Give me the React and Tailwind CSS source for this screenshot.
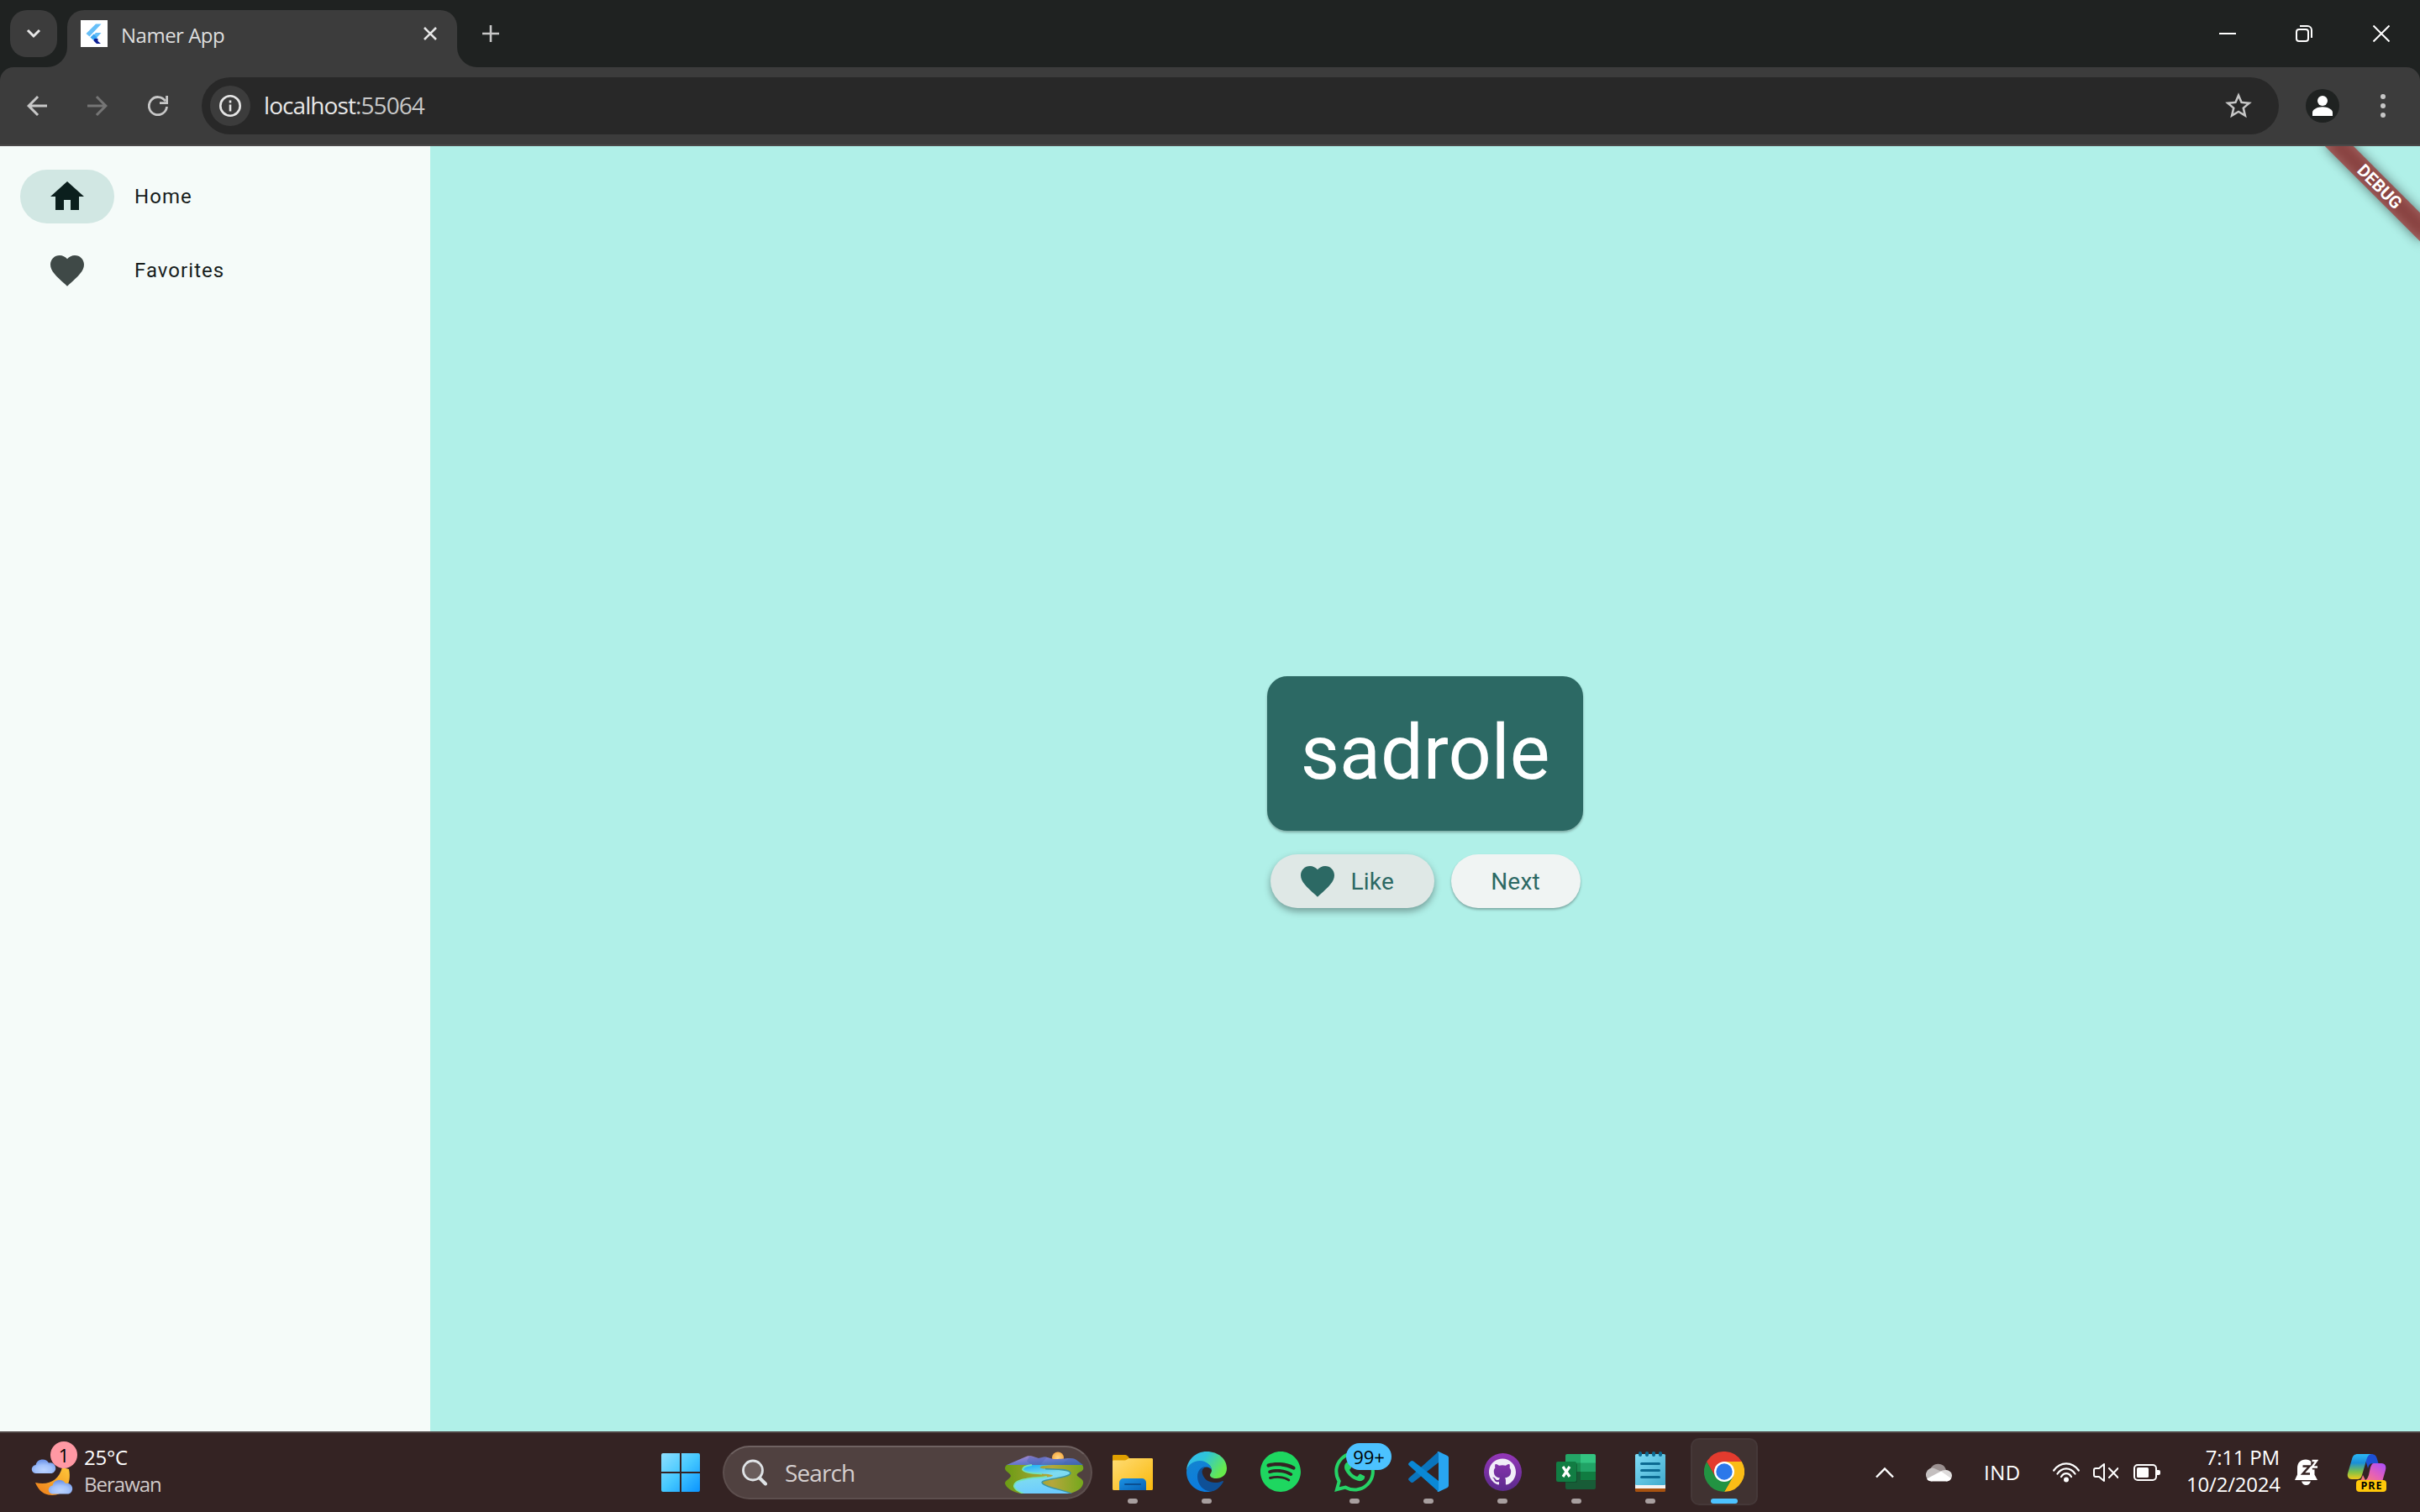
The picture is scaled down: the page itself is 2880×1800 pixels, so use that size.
import React from "react";
import { SiSpotify, SiGithub, SiWhatsapp } from "react-icons/si";

const HEART =
  "M12 21.35l-1.45-1.32C5.4 15.36 2 12.28 2 8.5 2 5.42 4.42 3 7.5 3c1.74 0 3.41.81 4.5 2.09C13.09 3.81 14.76 3 16.5 3 19.58 3 22 5.42 22 8.5c0 3.78-3.4 6.86-8.55 11.54L12 21.35z";
const HOME = "M10 20v-6h4v6h5v-8h3L12 3 2 12h3v8z";
const ARROW = "M20 11H7.83l5.59-5.59L12 4l-8 8 8 8 1.41-1.41L7.83 13H20v-2z";

function Material({ d, className }) {
  return (
    <svg viewBox="0 0 24 24" className={className} fill="currentColor">
      <path d={d} />
    </svg>
  );
}

function FlutterFavicon() {
  return (
    <span className="flex size-8 shrink-0 items-center justify-center bg-white">
      <svg viewBox="0 0 32 32" className="size-8">
        <path d="M18 4.500h6.500L10.500 19.500 6.500 16z" fill="#66bff8" />
        <path d="M18 15h6.500l-5 5.500-3-.5-4.500 1z" fill="#66bff8" />
        <path d="M11.500 20.500l4-4 4.500 4.500-4 3.500z" fill="#38a4f2" />
        <path d="M15.500 24.500l1-2.500h4v3l3.500 3h-5z" fill="#0d1f94" />
      </svg>
    </span>
  );
}

function TitleBar() {
  return (
    <div className="flex h-20 shrink-0 bg-[#1f2221]">
      <div className="ml-3 mt-3 flex size-14 items-center justify-center rounded-[20px] bg-[#3c3c3c]">
        <svg viewBox="0 0 20 20" className="size-5" fill="none" stroke="#e6e6e6" strokeWidth="3">
          <path d="M3 6l7 7 7-7" />
        </svg>
      </div>
      <div className="relative ml-3 mt-3 flex h-[68px] w-[464px] rounded-t-[20px] bg-[#3c3c3c] pl-4 pr-[22px]">
        <svg viewBox="0 0 24 24" className="absolute bottom-0 -left-6 size-6" fill="#3c3c3c">
          <path d="M24 0v24H0A24 24 0 0 0 24 0z" />
        </svg>
        <svg viewBox="0 0 24 24" className="absolute bottom-0 -right-6 size-6" fill="#3c3c3c">
          <path d="M0 0v24h24A24 24 0 0 1 0 0z" />
        </svg>
        <div className="flex h-14 w-full items-center">
          <FlutterFavicon />
          <span className="ml-4 flex-1 whitespace-nowrap pt-[3px] font-['Open_Sans',sans-serif] text-[24px] leading-8 tracking-[-0.5px] text-[#dedede]">
            Namer App
          </span>
          <svg viewBox="0 0 20 20" className="size-5" fill="none" stroke="#e6e6e6" strokeWidth="2.600">
            <path d="M3 3l14 14M17 3L3 17" />
          </svg>
        </div>
      </div>
      <div className="ml-[30px] flex items-center">
        <svg viewBox="0 0 20 20" className="size-5" fill="none" stroke="#c7c7c7" strokeWidth="2.600">
          <path d="M10 0v20M0 10h20" />
        </svg>
      </div>
      <div className="ml-auto flex items-center pr-9">
        <svg viewBox="0 0 20 20" className="size-5" stroke="#fff" strokeWidth="2">
          <path d="M0 10h20" />
        </svg>
        <svg viewBox="0 0 20 20" className="ml-[71px] size-5" fill="none" stroke="#fff" strokeWidth="2">
          <rect x="1" y="5" width="14" height="14" rx="3" />
          <path d="M5 1h9a5 5 0 0 1 5 5v9" />
        </svg>
        <svg viewBox="0 0 20 20" className="ml-[72px] size-5" stroke="#fff" strokeWidth="2">
          <path d="M0.500 0.500l19 19M19.500 0.500l-19 19" />
        </svg>
      </div>
    </div>
  );
}

function Toolbar() {
  return (
    <div className="h-[94px] shrink-0 bg-[#1f2221]">
      <div className="flex h-full items-center rounded-t-[16px] border-b-2 border-[#4a4848] bg-[#3c3c3c] pl-[26px] pr-[35px]">
        <Material d={ARROW} className="size-9 text-[#c7c7c7]" />
        <Material d={ARROW} className="ml-9 size-9 rotate-180 text-[#757575]" />
        <svg viewBox="0 0 24 24" className="ml-[42px] size-6" fill="none" stroke="#c7c7c7" strokeWidth="2.800">
          <path d="M20.800 6.300A10.600 10.600 0 1 0 22.500 13" />
          <path d="M22.600 0v8.600H14" />
        </svg>
        <div className="ml-10 flex h-[68px] flex-1 items-center rounded-full bg-[#282828] pl-2.5 pr-[29px]">
          <span className="flex size-12 items-center justify-center rounded-full bg-[#3c3c3c]">
            <svg viewBox="0 0 26 26" className="size-[26px]" fill="none" stroke="#e6e6e6" strokeWidth="2.600">
              <circle cx="13" cy="13" r="11.700" />
              <path d="M13 11.500v8M13 6.500v3" />
            </svg>
          </span>
          <span className="ml-4 flex-1 -translate-y-px whitespace-nowrap font-['Open_Sans',sans-serif] text-[28px] leading-9 tracking-[-0.92px] text-[#e8e8e8]">
            localhost<span className="text-[#c7c7c7]">:55064</span>
          </span>
          <svg viewBox="0 0 24 24" className="size-[38px]" fill="#c7c7c7">
            <path d="M22 9.240l-7.190-.62L12 2 9.190 8.630 2 9.240l5.460 4.730L5.820 21 12 17.270 18.180 21l-1.630-7.030L22 9.240zM12 15.400l-3.760 2.270 1-4.280-3.320-2.880 4.380-.38L12 6.100l1.710 4.040 4.380.38-3.320 2.880 1 4.280L12 15.400z" />
          </svg>
        </div>
        <svg viewBox="0 0 40 40" className="ml-8 size-10">
          <circle cx="20" cy="20" r="20" fill="#1f2221" />
          <circle cx="20" cy="14" r="6" fill="#fff" />
          <path d="M8 32v-4c0-4 6-6.800 12-6.800s12 2.800 12 6.800v4z" fill="#fff" />
        </svg>
        <svg viewBox="0 0 18 36" className="ml-[43px] h-9 w-[18px]" fill="#c7c7c7">
          <circle cx="9" cy="7" r="3" />
          <circle cx="9" cy="18" r="3" />
          <circle cx="9" cy="29" r="3" />
        </svg>
      </div>
    </div>
  );
}

function RailItem({ d, label, active }) {
  return (
    <div className="flex h-16 items-center">
      <span
        className={
          active
            ? "flex h-16 w-28 items-center justify-center rounded-full bg-[#d1e7e3] text-[#0b1f1d]"
            : "flex h-16 w-28 items-center justify-center rounded-full text-[#3f4947]"
        }
      >
        <Material d={d} className="size-12" />
      </span>
      <span className="ml-6 font-['Roboto',sans-serif] text-[24px] leading-8 tracking-[1.05px] text-[#171d1c]">
        {label}
      </span>
    </div>
  );
}

function Page() {
  return (
    <div className="flex min-h-0 flex-1">
      <nav className="flex w-[512px] shrink-0 flex-col gap-6 bg-[#f5fbf9] pl-6 pt-7">
        <RailItem d={HOME} label="Home" active />
        <RailItem d={HEART} label="Favorites" />
      </nav>
      <main className="relative flex flex-1 flex-col items-center justify-center gap-7 overflow-hidden bg-[#b0f0e8] pt-2 font-['Roboto',sans-serif]">
        <div className="flex h-[184px] w-[376px] items-center justify-center rounded-[24px] bg-[#2c6964] shadow-[0_2px_3px_rgba(0,0,0,0.3)]">
          <span className="text-[90px] leading-[104px] text-white">sadrole</span>
        </div>
        <div className="flex gap-5 text-[28px] leading-10 tracking-[0.2px] text-[#2c6964]">
          <button className="flex h-16 w-[195px] items-center rounded-full bg-[#dfe8e6] pl-8 shadow-[0_4px_8px_rgba(0,0,0,0.35)]">
            <Material d={HEART} className="size-12" />
            <span className="ml-4 translate-y-px">Like</span>
          </button>
          <button className="flex h-16 w-[154px] items-center justify-center rounded-full bg-[#f0f4f3] shadow-[0_2px_3px_rgba(0,0,0,0.3)]">
            <span className="translate-y-px">Next</span>
          </button>
        </div>
        <div className="absolute right-0 top-0 size-0 origin-top-left rotate-45">
          <div className="absolute -left-20 top-14 h-6 w-40 bg-black/50 blur-[7px]" />
          <div className="absolute -left-20 top-14 h-6 w-40 bg-[rgba(166,34,34,0.627)] text-center text-[20.4px] font-bold leading-6 text-white">
            DEBUG
          </div>
        </div>
      </main>
    </div>
  );
}

function CloudShape({ x, y, s }) {
  return (
    <path
      transform={`translate(${x} ${y}) scale(${s})`}
      d="M5 18a5 5 0 0 1-.5-10A8.500 8.500 0 0 1 20 5.500 6 6 0 0 1 23.500 18z"
      fill="url(#wx-cloud)"
    />
  );
}

function Weather() {
  return (
    <div className="flex h-full w-[480px] items-center pl-[36px]">
      <div className="relative h-16 w-[60px]">
        <svg viewBox="0 0 60 64" className="h-16 w-[60px]">
          <defs>
            <radialGradient id="wx-cloud" cx=".5" cy=".75" r=".7">
              <stop offset="0" stopColor="#bcd4ff" />
              <stop offset=".5" stopColor="#a3c2fb" />
              <stop offset="1" stopColor="#6d94e8" />
            </radialGradient>
            <linearGradient id="wx-moon" x1="1" y1="0" x2="0" y2="1">
              <stop offset="0" stopColor="#ffc83a" />
              <stop offset="1" stopColor="#ec7a18" />
            </linearGradient>
          </defs>
          <path d="M6 44c16 4 28-3 32-18l8 2c4 18-6 31-20 31-9 0-16-5-20-15z" fill="url(#wx-moon)" />
          <CloudShape x="2" y="15" s="1" />
          <CloudShape x="22" y="39.500" s="1" />
        </svg>
        <span className="absolute left-6 top-[-5px] flex size-8 items-center justify-center rounded-full bg-[#ff99a4] font-['Open_Sans',sans-serif] text-[22px] leading-none text-black">
          1
        </span>
      </div>
      <div className="ml-1 -translate-y-[2px] font-['Open_Sans',sans-serif] text-[24px] leading-8">
        <div className="tracking-[-0.2px] text-white">25°C</div>
        <div className="tracking-[-1px] text-[#cfc9c9]">Berawan</div>
      </div>
    </div>
  );
}

function StartIcon() {
  return (
    <svg viewBox="0 0 46 46" className="size-[46px]">
      <defs>
        <linearGradient id="win" gradientUnits="userSpaceOnUse" x1="0" y1="0" x2="46" y2="46">
          <stop offset="0" stopColor="#8fdfff" />
          <stop offset=".5" stopColor="#45c8ff" />
          <stop offset="1" stopColor="#0a94ff" />
        </linearGradient>
      </defs>
      <g fill="url(#win)">
        <path d="M2 0h20v22H0V2a2 2 0 0 1 2-2zM24 0h20a2 2 0 0 1 2 2v20H24zM0 24h22v22H2a2 2 0 0 1-2-2zM24 24h22v20a2 2 0 0 1-2 2H24z" />
      </g>
    </svg>
  );
}

function Landscape() {
  return (
    <svg viewBox="0 0 94 50" className="h-[50px] w-[94px]">
      <defs>
        <linearGradient id="ls-grass" x1="0" y1="0" x2="1" y2="0">
          <stop offset="0" stopColor="#6a9c14" />
          <stop offset=".6" stopColor="#b5a73c" />
          <stop offset="1" stopColor="#74a81c" />
        </linearGradient>
        <linearGradient id="ls-river" gradientUnits="userSpaceOnUse" x1="40" y1="16" x2="45" y2="50">
          <stop offset="0" stopColor="#2ab4f6" />
          <stop offset=".35" stopColor="#7fdcf0" />
          <stop offset="1" stopColor="#6ccbff" />
        </linearGradient>
        <linearGradient id="ls-mtn" x1="0" y1="0" x2="1" y2="1">
          <stop offset="0" stopColor="#b38bd0" />
          <stop offset=".5" stopColor="#6878cc" />
          <stop offset="1" stopColor="#2f6ba8" />
        </linearGradient>
        <radialGradient id="ls-sun">
          <stop offset="0" stopColor="#ffd98a" />
          <stop offset="1" stopColor="#f8ad45" />
        </radialGradient>
      </defs>
      <circle cx="63" cy="7.500" r="7" fill="url(#ls-sun)" />
      <path d="M2 16L24 6.500c3-1.500 5-1.500 8-1L40 8l7-1.500c5 0 7 2.500 13 2.500 8 0 12-1 18-1 7 0 10 5 15 8z" fill="url(#ls-mtn)" />
      <path d="M29 5.500l-3 6 6 4.500h10l8-9.500c-4-.5-7 0-10 1.500zM78 8c-5 2-7 5-12 8h27c-4-3-8-8-15-8z" fill="#4a62b4" opacity=".4" />
      <path d="M2 16h90c2 3 2 6-2 8-4 2-5 3-4 5 4 3 8 5 7 9-1 6-7 9-15 12H18C9 48 1 43 0 38c0-4 6-5 7-9-1-4-7-5-7-9 0-2 1-3 2-4z" fill="url(#ls-grass)" />
      <path d="M32 16C24 17 21 19 21 21.500 22 25 32 26 44 26.500 52 27 57 27.500 57 29 50 32 34 31 24 33 14 35 10 38 11 42 12 45 17 48 22 50H79C66 45 46 42 44 37 44 32 78 32 78 25.500 76 20 58 21.500 48 20.500 42 20 41 19 42 18.500 44 16.500 52 16.500 56 16z" fill="url(#ls-river)" />
      <path d="M79 50C66 45 46 42 44 37 44 32 78 32 78 25.500 76 20 58 21.500 48 20.500" fill="none" stroke="#3c93a0" strokeWidth="1.400" />
      <path d="M32 16C24 17 21 19 21 21.500 22 25 32 26 44 26.500M50 30C42 31.500 32 31 24 33 14 35 10 38 11 42 12 45 17 48 22 50" fill="none" stroke="#74e3b8" strokeWidth="1.800" />
    </svg>
  );
}

function SearchBox() {
  return (
    <div className="ml-[27px] flex h-16 w-[440px] items-center rounded-full border-2 border-[#5d4f4e] border-t-[#6f6261] bg-[#504140] pl-[21px] pr-2">
      <svg viewBox="0 0 30 32" className="h-8 w-[30px]" fill="none" stroke="#dfe3e6">
        <circle cx="13" cy="13.500" r="11.500" strokeWidth="2.800" fill="#6a5d5c" />
        <path d="M21 22.500l7 7" strokeWidth="4" strokeLinecap="round" />
      </svg>
      <span className="ml-[21px] flex-1 font-['Open_Sans',sans-serif] text-[28px] leading-9 tracking-[-0.9px] text-[#d5cfcf]">
        Search
      </span>
      <Landscape />
    </div>
  );
}

function FolderIcon() {
  return (
    <svg viewBox="0 0 48 48" className="size-12">
      <defs>
        <linearGradient id="fd" x1="0" y1="0" x2="1" y2="1">
          <stop offset="0" stopColor="#ffdc74" />
          <stop offset="1" stopColor="#fab90c" />
        </linearGradient>
        <linearGradient id="fd-b" x1="0" y1="0" x2="1" y2="1">
          <stop offset="0" stopColor="#1b92e4" />
          <stop offset="1" stopColor="#0862b5" />
        </linearGradient>
      </defs>
      <path d="M0 5.500C0 4.500.5 4 1.500 4H15c2 0 3 1 5 4v5H0z" fill="#e0a000" />
      <path d="M0 12c0-1 .5-1.500 1.500-1.500H15c2 0 3-2.500 5-2.500h26.500c1 0 1.500.5 1.500 1.500v34.500c0 1.500-.5 2-1.500 2h-45C.5 46 0 45.500 0 44z" fill="url(#fd)" />
      <path d="M8 46V37a5 5 0 0 1 5-5h22a5 5 0 0 1 5 5v9z" fill="url(#fd-b)" />
      <path d="M15 39h18" stroke="#0a4f92" strokeWidth="2" strokeLinecap="round" />
    </svg>
  );
}

function EdgeIcon() {
  return (
    <svg viewBox="0 0 48 48" className="size-12">
      <defs>
        <linearGradient id="ed-a" x1="0" y1="0" x2="1" y2=".5">
          <stop offset="0" stopColor="#33b6f4" />
          <stop offset=".45" stopColor="#2fc5d8" />
          <stop offset="1" stopColor="#66ea4c" />
        </linearGradient>
        <linearGradient id="ed-b" x1="0" y1="0" x2=".4" y2="1">
          <stop offset="0" stopColor="#1484cf" />
          <stop offset="1" stopColor="#0a7be0" />
        </linearGradient>
      </defs>
      <path d="M0 24C0 10 11 0 24 0c14 0 24 9 24 20 0 8-6 12-12.500 12-5 0-7.500-2-7.500-4 0-1.500 2-2.500 2-6 0-5-6-10-14-10C8 12 1 17 0 24z" fill="url(#ed-a)" />
      <path d="M0 24c1-8 8-13 16-13 8 0 14 6 14 11-1-2-4-3.500-6-3.500-6 0-8 8-6 14 2 6 8 12 15 13.500-3 1.500-6 2-9 2C11 48 0 38 0 24z" fill="url(#ed-b)" />
      <path d="M13 30c0-7 4-12 10-12-4 2-5 5-4 8.500 2 7 8 10.500 15 10.500 4 0 7-1 8.500-1.800 1-.5 1.800.3 1.200 1.300C40 43 34 47.500 29 47.500 20 47.500 13 39 13 30z" fill="#0f5097" />
    </svg>
  );
}

function VsCodeIcon() {
  return (
    <svg viewBox="0 0 48 48" className="size-12">
      <path d="M36 0v13L6 36.500c-1 .8-2 .7-3 0L.8 34.500c-1-1-1-2 0-3z" fill="#0a74bd" />
      <path d="M36 48V35L6 11.500c-1-.8-2-.7-3 0L.8 13.500c-1 1-1 2 0 3z" fill="#0a88d6" />
      <path d="M34 0.500L36 0l10 4.800c1.300.6 2 1.500 2 2.700v33c0 1.200-.7 2.100-2 2.700L36 48l-2-.5c1.300 0 2-1 2-2.500V3c0-1.500-.7-2.500-2-2.500z" fill="#28a5f0" />
    </svg>
  );
}

function GithubIcon() {
  return (
    <span className="flex size-[45px] items-center justify-center rounded-full bg-gradient-to-b from-[#9436b8] to-[#5b2a8c]">
      <SiGithub className="size-8 text-[#f1eef8]" />
    </span>
  );
}

function ExcelIcon() {
  return (
    <svg viewBox="0 0 48 48" className="size-12">
      <path d="M11 5a2 2 0 0 1 2-2h16v11H11z" fill="#23a566" />
      <path d="M29 3h16a2 2 0 0 1 2 2v9H29z" fill="#33c481" />
      <path d="M11 13.500h18V24H11z" fill="#1a8a4e" />
      <path d="M29 13.500h18V24H29z" fill="#21a366" />
      <path d="M11 24h36v10.500H11z" fill="#107c41" />
      <path d="M11 24h18v21H13a2 2 0 0 1-2-2zM29 34.500h18V43a2 2 0 0 1-2 2H29z" fill="#185c37" />
      <rect x="2" y="14" width="23" height="23" rx="1.500" fill="#0c3f25" opacity=".5" />
      <rect x="0" y="12" width="24" height="24" rx="2" fill="#117d43" />
      <path d="M8 18l8 12M16 18L8 30" stroke="#fff" strokeWidth="3.200" />
    </svg>
  );
}

function NotepadIcon() {
  return (
    <svg viewBox="0 0 48 48" className="size-12">
      <defs>
        <linearGradient id="np" x1="0" y1="0" x2="1" y2="1">
          <stop offset="0" stopColor="#7fdcf6" />
          <stop offset="1" stopColor="#41abcd" />
        </linearGradient>
      </defs>
      <rect x="6" y="36" width="36" height="12" rx="1.500" fill="#a8520f" />
      <rect x="6" y="30" width="36" height="14" fill="#f4f4f4" />
      <rect x="6" y="3" width="36" height="37" rx="1.500" fill="url(#np)" />
      <path d="M12 2v2M20 2v2M28 2v2M36 2v2" stroke="#0b6a92" strokeWidth="4" strokeLinecap="round" />
      <path d="M13.500 14.500h21M13.500 22.500h21M13.500 30.500h21" stroke="#0b6a92" strokeWidth="3" strokeLinecap="round" />
    </svg>
  );
}

function ChromeIcon() {
  return (
    <svg viewBox="0 0 48 48" className="size-12">
      <path d="M24 24L3.200 12A24 24 0 0 1 44.800 12z" fill="#e33b2e" />
      <path d="M24 12h20.800A24 24 0 0 1 24 48l10.400-18z" fill="#fbbc16" />
      <path d="M34.400 30L24 48A24 24 0 0 1 3.200 12l10.400 18z" fill="#229342" />
      <path d="M3.200 12h41.600H24L13.600 30z" fill="#e33b2e" />
      <circle cx="24" cy="24" r="12" fill="#fff" />
      <circle cx="24" cy="24" r="9.700" fill="#2b78ea" />
    </svg>
  );
}

function TaskItem({ children, running, active }) {
  return (
    <div className="flex h-full w-[88px] items-center justify-center">
      <div
        className={
          active
            ? "relative flex size-20 -translate-y-px items-center justify-center rounded-[10px] border-2 border-[#453838] bg-[#403231]"
            : "relative flex size-20 -translate-y-px items-center justify-center"
        }
      >
        {children}
        {running && <span className="absolute bottom-0.5 left-[34px] h-1.5 w-3 rounded-full bg-[#a89f9f]" />}
        {active && <span className="absolute bottom-0 left-[22px] h-1.5 w-8 rounded-full bg-[#4cc2ff]" />}
      </div>
    </div>
  );
}

function Tray() {
  return (
    <div className="ml-auto flex h-full items-center pr-10 font-['Open_Sans',sans-serif] text-[24px] leading-8 text-white">
      <svg viewBox="0 0 22 14" className="h-3.5 w-[22px]" fill="none" stroke="#fff" strokeWidth="2.400">
        <path d="M1 12.500L11 2.500l10 10" />
      </svg>
      <svg viewBox="0 0 32 22" className="ml-[37px] h-[22px] w-8">
        <path d="M6 8A10 10 0 0 1 25 7.500L17 14z" fill="#9b9090" />
        <path d="M7.500 21.500A7.500 8 0 1 1 12 6.500L24 12 8 21.500z" fill="#c4bfbf" />
        <path d="M18 10C22 6.500 31 7 32 14c0 5-3 7.500-7 7.500z" fill="#dedbdb" />
        <path d="M2 18.500L19 9.500l12 8.500c-1.500 2.500-3.500 3.500-6 3.500H8c-3 0-5-1-6-3z" fill="#fff" />
      </svg>
      <span className="ml-[38px] w-[44px] tracking-[0.5px]">IND</span>
      <svg viewBox="0 0 32 24" className="ml-[38px] h-6 w-8" fill="none" stroke="#fff" strokeWidth="2.200" strokeLinecap="round">
        <path d="M1.200 9.500C9-1.300 23-1.300 30.800 9.500M5.500 13.500C11 5.300 21 5.300 26.500 13.500M10 17C13 11.800 19 11.800 22 17" />
        <circle cx="16" cy="20.500" r="1.900" fill="#fff" />
      </svg>
      <svg viewBox="0 0 30 24" className="ml-4 h-6 w-[30px]" fill="none" stroke="#fff" strokeWidth="2" strokeLinejoin="round" strokeLinecap="round">
        <path d="M13 2v20l-6-5H3a2 2 0 0 1-2-2V9a2 2 0 0 1 2-2h4z" />
        <path d="M19 7l10.500 11M29.500 7L19 18" />
      </svg>
      <svg viewBox="0 0 32 20" className="ml-[18px] h-5 w-8" fill="none" stroke="#fff" strokeWidth="2">
        <rect x="1" y="1" width="26" height="18" rx="4" />
        <rect x="4" y="4" width="14" height="12" rx="1.500" fill="#fff" stroke="none" />
        <path d="M28 7h2a2 2 0 0 1 2 2v2a2 2 0 0 1-2 2h-2z" fill="#fff" stroke="none" />
      </svg>
      <div className="ml-[31px] w-[111px] -translate-y-[2px] whitespace-nowrap text-right tracking-[-0.2px]">
        <div>7:11 PM</div>
        <div>10/2/2024</div>
      </div>
      <svg viewBox="0 0 28 32" className="ml-[18px] h-8 w-7 -translate-y-px" fill="#fff">
        <path d="M3 12C3 5 7 1.500 13 1.500c3 0 5 1 6.500 2.500L19 9l4.500 4v6.500L27 26H0l3-6.500z" />
        <path d="M8 27.500h11c-1 3-3 4.500-5.500 4.500S9 30.500 8 27.500z" />
        <path d="M9.500 9.500h8l-8 9h8.500" fill="none" stroke="#342323" strokeWidth="2.500" />
        <path d="M19 .5h10v13h-8z" fill="#342323" />
        <path d="M20.500 3h5.500l-5.500 7.500H27" fill="none" stroke="#fff" strokeWidth="2.400" />
      </svg>
      <div className="relative ml-[34px] h-[46px] w-[47px]">
        <svg viewBox="0 0 47 46" className="h-[46px] w-[47px]">
          <defs>
            <linearGradient id="cp-a" x1="0" y1="0" x2="0" y2="1">
              <stop offset="0" stopColor="#2bb8f5" />
              <stop offset=".35" stopColor="#1b8fd8" />
              <stop offset=".7" stopColor="#7cc04a" />
              <stop offset="1" stopColor="#f2c91a" />
            </linearGradient>
            <linearGradient id="cp-b" x1="1" y1="0" x2="0" y2="1">
              <stop offset="0" stopColor="#a84dff" />
              <stop offset=".5" stopColor="#e460b8" />
              <stop offset="1" stopColor="#ff8a5c" />
            </linearGradient>
          </defs>
          <path d="M20 1h9c4 0 6 2 7 6l1.500 5H31c-4 0-5 3-6 6z" fill="#1d50d4" />
          <path d="M13 1h16c-4 1-5 4-6 8l-5 17c-1 4-3 5-6 5H6c-4 0-6-3-5-7L6 7c1-4 3-6 7-6z" fill="url(#cp-a)" />
          <path d="M32 12h9c5 0 6 4 5 8l-4 14H12c3-1 5-2 6-5l1-3 3 6c2-1 3-3 4-6l2-9c1-3 2-5 4-5z" fill="url(#cp-b)" />
        </svg>
        <span className="absolute bottom-0 right-0 flex h-3.5 w-9 items-center justify-center rounded-[4px] bg-[#ffc80a] pl-px text-[12.500px] font-bold leading-none tracking-[1px] text-black">
          PRE
        </span>
      </div>
    </div>
  );
}

function Taskbar() {
  return (
    <div className="flex h-24 shrink-0 items-center border-t-2 border-[#4e4443] bg-[#342323]">
      <Weather />
      <div className="ml-[307px] flex h-full items-center">
        <StartIcon />
        <SearchBox />
        <div className="ml-1 flex h-full items-center">
          <TaskItem running><FolderIcon /></TaskItem>
          <TaskItem running><EdgeIcon /></TaskItem>
          <TaskItem><SiSpotify className="size-12 text-[#1ed760]" /></TaskItem>
          <TaskItem running>
            <SiWhatsapp className="size-12 text-[#25d366]" />
            <span className="absolute left-[30px] top-[6px] flex h-8 w-[54px] items-center justify-center rounded-full bg-[#4cc2ff] font-['Open_Sans',sans-serif] text-[22px] leading-none text-black">
              99+
            </span>
          </TaskItem>
          <TaskItem running><VsCodeIcon /></TaskItem>
          <TaskItem running><GithubIcon /></TaskItem>
          <TaskItem running><ExcelIcon /></TaskItem>
          <TaskItem running><NotepadIcon /></TaskItem>
          <TaskItem active><ChromeIcon /></TaskItem>
        </div>
      </div>
      <Tray />
    </div>
  );
}

export default function App() {
  return (
    <div className="flex h-[1800px] w-[2880px] flex-col overflow-hidden">
      <TitleBar />
      <Toolbar />
      <Page />
      <Taskbar />
    </div>
  );
}
